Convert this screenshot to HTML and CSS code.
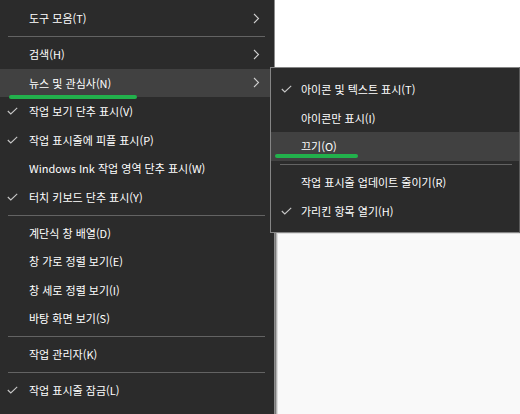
FILE: index.html
```html
<!DOCTYPE html>
<html lang="ko">
<head>
<meta charset="utf-8">
<link rel="stylesheet" href="styles.css">
</head>
<body>
<div class="screen">
  <div class="menu main">
    <div class="item"><span class="chk"></span><span class="lbl">도구 모음(T)</span><span class="arr"><svg width="7" height="11" viewBox="0 0 7 11"><path d="M1 1 L5.5 5.5 L1 10" fill="none" stroke="#cfcfcf" stroke-width="1.1"/></svg></span></div>
    <div class="sep"></div>
    <div class="item"><span class="chk"></span><span class="lbl">검색(H)</span><span class="arr"><svg width="7" height="11" viewBox="0 0 7 11"><path d="M1 1 L5.5 5.5 L1 10" fill="none" stroke="#cfcfcf" stroke-width="1.1"/></svg></span></div>
    <div class="item hover"><span class="chk"></span><span class="lbl">뉴스 및 관심사(N)</span><span class="arr"><svg width="7" height="11" viewBox="0 0 7 11"><path d="M1 1 L5.5 5.5 L1 10" fill="none" stroke="#cfcfcf" stroke-width="1.1"/></svg></span></div>
    <div class="item"><span class="chk"><svg width="11" height="8" viewBox="0 0 11 8"><path d="M0.8 4 L3.8 7 L10.2 0.8" fill="none" stroke="#c8c8c8" stroke-width="1.1"/></svg></span><span class="lbl">작업 보기 단추 표시(V)</span><span class="arr"></span></div>
    <div class="item"><span class="chk"><svg width="11" height="8" viewBox="0 0 11 8"><path d="M0.8 4 L3.8 7 L10.2 0.8" fill="none" stroke="#c8c8c8" stroke-width="1.1"/></svg></span><span class="lbl">작업 표시줄에 피플 표시(P)</span><span class="arr"></span></div>
    <div class="item"><span class="chk"></span><span class="lbl">Windows Ink 작업 영역 단추 표시(W)</span><span class="arr"></span></div>
    <div class="item"><span class="chk"><svg width="11" height="8" viewBox="0 0 11 8"><path d="M0.8 4 L3.8 7 L10.2 0.8" fill="none" stroke="#c8c8c8" stroke-width="1.1"/></svg></span><span class="lbl">터치 키보드 단추 표시(Y)</span><span class="arr"></span></div>
    <div class="sep"></div>
    <div class="item"><span class="chk"></span><span class="lbl">계단식 창 배열(D)</span><span class="arr"></span></div>
    <div class="item"><span class="chk"></span><span class="lbl">창 가로 정렬 보기(E)</span><span class="arr"></span></div>
    <div class="item"><span class="chk"></span><span class="lbl">창 세로 정렬 보기(I)</span><span class="arr"></span></div>
    <div class="item"><span class="chk"></span><span class="lbl">바탕 화면 보기(S)</span><span class="arr"></span></div>
    <div class="sep"></div>
    <div class="item"><span class="chk"></span><span class="lbl">작업 관리자(K)</span><span class="arr"></span></div>
    <div class="sep"></div>
    <div class="item"><span class="chk"><svg width="11" height="8" viewBox="0 0 11 8"><path d="M0.8 4 L3.8 7 L10.2 0.8" fill="none" stroke="#c8c8c8" stroke-width="1.1"/></svg></span><span class="lbl">작업 표시줄 잠금(L)</span><span class="arr"></span></div>
  </div>
  <div class="desk">
    <div class="blank"></div>
    <div class="window"></div>
  </div>

  <div class="menu sub">
    <div class="item"><span class="chk"><svg width="11" height="8" viewBox="0 0 11 8"><path d="M0.8 4 L3.8 7 L10.2 0.8" fill="none" stroke="#c8c8c8" stroke-width="1.1"/></svg></span><span class="lbl">아이콘 및 텍스트 표시(T)</span></div>
    <div class="item"><span class="chk"></span><span class="lbl">아이콘만 표시(I)</span></div>
    <div class="item hover"><span class="chk"></span><span class="lbl">끄기(O)</span></div>
    <div class="sep"></div>
    <div class="item"><span class="chk"></span><span class="lbl">작업 표시줄 업데이트 줄이기(R)</span></div>
    <div class="item"><span class="chk"><svg width="11" height="8" viewBox="0 0 11 8"><path d="M0.8 4 L3.8 7 L10.2 0.8" fill="none" stroke="#c8c8c8" stroke-width="1.1"/></svg></span><span class="lbl">가리킨 항목 열기(H)</span></div>
  </div>

  <div class="mark mark-main"></div>
  <div class="mark mark-sub"></div>
</div>
</body>
</html>
```
FILE: styles.css
```css
html, body {
  margin: 0;
  padding: 0;
  background: #ffffff;
}

.screen {
  position: relative;
  width: 520px;
  height: 414px;
  overflow: hidden;
  display: flex;
  font-family: "Noto Sans CJK KR", "Noto Sans", sans-serif;
  font-size: 11px;
  color: #ffffff;
}

.menu {
  background: #2b2b2b;
  box-sizing: border-box;
}

.main {
  width: 275px;
  flex: none;
  padding-top: 4px;
  border-right: 1px solid #8c8c8c;
}

.item {
  height: 28.5px;
  display: grid;
  grid-template-columns: 29px 1fr 24px;
  align-items: center;
  white-space: nowrap;
}

.item.hover {
  background: #414141;
}

.chk {
  display: flex;
  align-items: center;
  padding-left: 7px;
}

.chk svg,
.arr svg {
  display: block;
}

.lbl {
  line-height: 14px;
}

.arr {
  display: flex;
  align-items: center;
  padding-left: 3px;
}

.sep {
  height: 1px;
  background: #636363;
  margin: 3.5px 9px 3px 8px;
}

.desk {
  flex: 1;
  display: flex;
  flex-direction: column;
}

.blank {
  height: 231px;
  background: #ffffff;
}

.window {
  flex: 1;
  background: #f9f9f9;
  border-top: 1px solid #8a8a8a;
  border-left: 1px solid #7a7a7a;
  box-shadow: inset 1px 1px 0 #b4b4b4, inset 2px 2px 0 #dedede;
}

.sub {
  position: absolute;
  left: 270px;
  top: 67px;
  width: 250px;
  padding: 7px 0;
  border: 1px solid #858585;
  border-right-color: #5a5a5a;
}

.sub .item {
  grid-template-columns: 30px 1fr;
}

.sub .chk {
  padding-left: 10px;
}

.sub .sep {
  margin: 3.5px 7px 3px 9px;
}

.mark {
  position: absolute;
  height: 4px;
  border-radius: 2px;
  background: #22b14c;
}

.mark-main {
  left: 9px;
  top: 94.5px;
  width: 128px;
}

.mark-sub {
  left: 275px;
  top: 154px;
  width: 83px;
}
```
